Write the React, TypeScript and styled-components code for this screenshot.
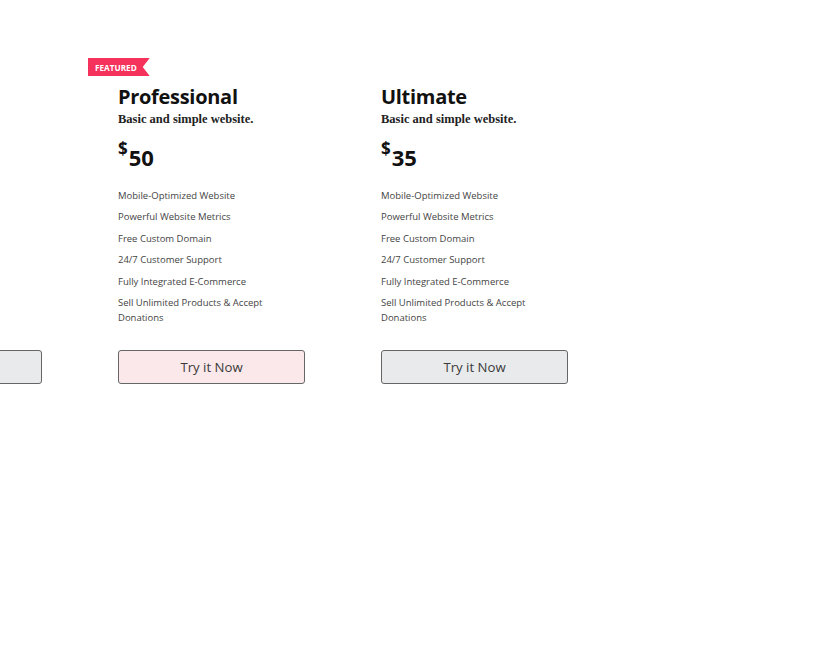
import React from 'react';
import styled, { createGlobalStyle } from 'styled-components';

const GlobalStyle = createGlobalStyle`
  html, body {
    margin: 0;
    padding: 0;
    background: #fff;
    font-family: "Open Sans", "Noto Sans", sans-serif;
    overflow: hidden;
  }
`;

const PLANS = [
  { name: 'Basic', price: 25, featured: false },
  { name: 'Professional', price: 50, featured: true },
  { name: 'Ultimate', price: 35, featured: false },
];

const FEATURES = [
  'Mobile-Optimized Website',
  'Powerful Website Metrics',
  'Free Custom Domain',
  '24/7 Customer Support',
  'Fully Integrated E-Commerce',
  'Sell Unlimited Products & Accept Donations',
];

const Page = styled.div`
  width: 830px;
  height: 658px;
  overflow: hidden;
`;

const Track = styled.div`
  display: flex;
  gap: 76px;
  margin-left: -145px;
  padding-top: 84px;
`;

const Card = styled.div`
  position: relative;
  width: 187px;
  flex-shrink: 0;
`;

const Ribbon = styled.div`
  position: absolute;
  left: -30px;
  top: -26px;
  height: 18px;
  padding: 0 13px 0 7px;
  display: flex;
  align-items: center;
  background: #f5325c;
  color: #fff;
  font-size: 8.2px;
  font-weight: 700;
  clip-path: polygon(0 0, 100% 0, calc(100% - 7px) 50%, 100% 100%, 0 100%);
`;

const Title = styled.h2`
  margin: 0;
  font-size: 20px;
  letter-spacing: -0.3px;
  line-height: 26px;
  font-weight: 700;
  color: #111;
`;

const Subtitle = styled.p`
  margin: 0;
  font-family: "Liberation Serif", serif;
  font-size: 12.5px;
  font-weight: 700;
  line-height: 18px;
  color: #222;
`;

const Price = styled.div`
  margin-top: 12px;
  display: flex;
  align-items: flex-start;
  font-size: 22px;
  font-weight: 700;
  line-height: 30px;
  color: #111;
`;

const Currency = styled.span`
  font-size: 17px;
  line-height: 17px;
  margin-right: 1px;
`;

const Amount = styled.span`
  margin-top: 2px;
`;

const Features = styled.ul`
  list-style: none;
  margin: 15.5px 0 0;
  padding: 0 37px 0 0;
  display: flex;
  flex-direction: column;
  gap: 6.5px;
`;

const Feature = styled.li`
  font-size: 9.5px;
  line-height: 15px;
  color: #444;
`;

const Button = styled.button<{ $featured: boolean }>`
  margin-top: 24.5px;
  width: 187px;
  height: 34px;
  border: 1px solid #666;
  border-radius: 3px;
  background: ${p => (p.$featured ? '#fae8ea' : '#e9eaec')};
  font-family: "Open Sans", "Noto Sans", sans-serif;
  font-size: 13.2px;
  color: #3a3a3a;
`;

export default function App() {
  return (
    <Page>
      <GlobalStyle />
      <Track>
        {PLANS.map(plan => (
          <Card key={plan.name}>
            {plan.featured && <Ribbon>FEATURED</Ribbon>}
            <Title>{plan.name}</Title>
            <Subtitle>Basic and simple website.</Subtitle>
            <Price>
              <Currency>$</Currency>
              <Amount>{plan.price}</Amount>
            </Price>
            <Features>
              {FEATURES.map(f => (
                <Feature key={f}>{f}</Feature>
              ))}
            </Features>
            <Button $featured={plan.featured}>Try it Now</Button>
          </Card>
        ))}
      </Track>
    </Page>
  );
}
